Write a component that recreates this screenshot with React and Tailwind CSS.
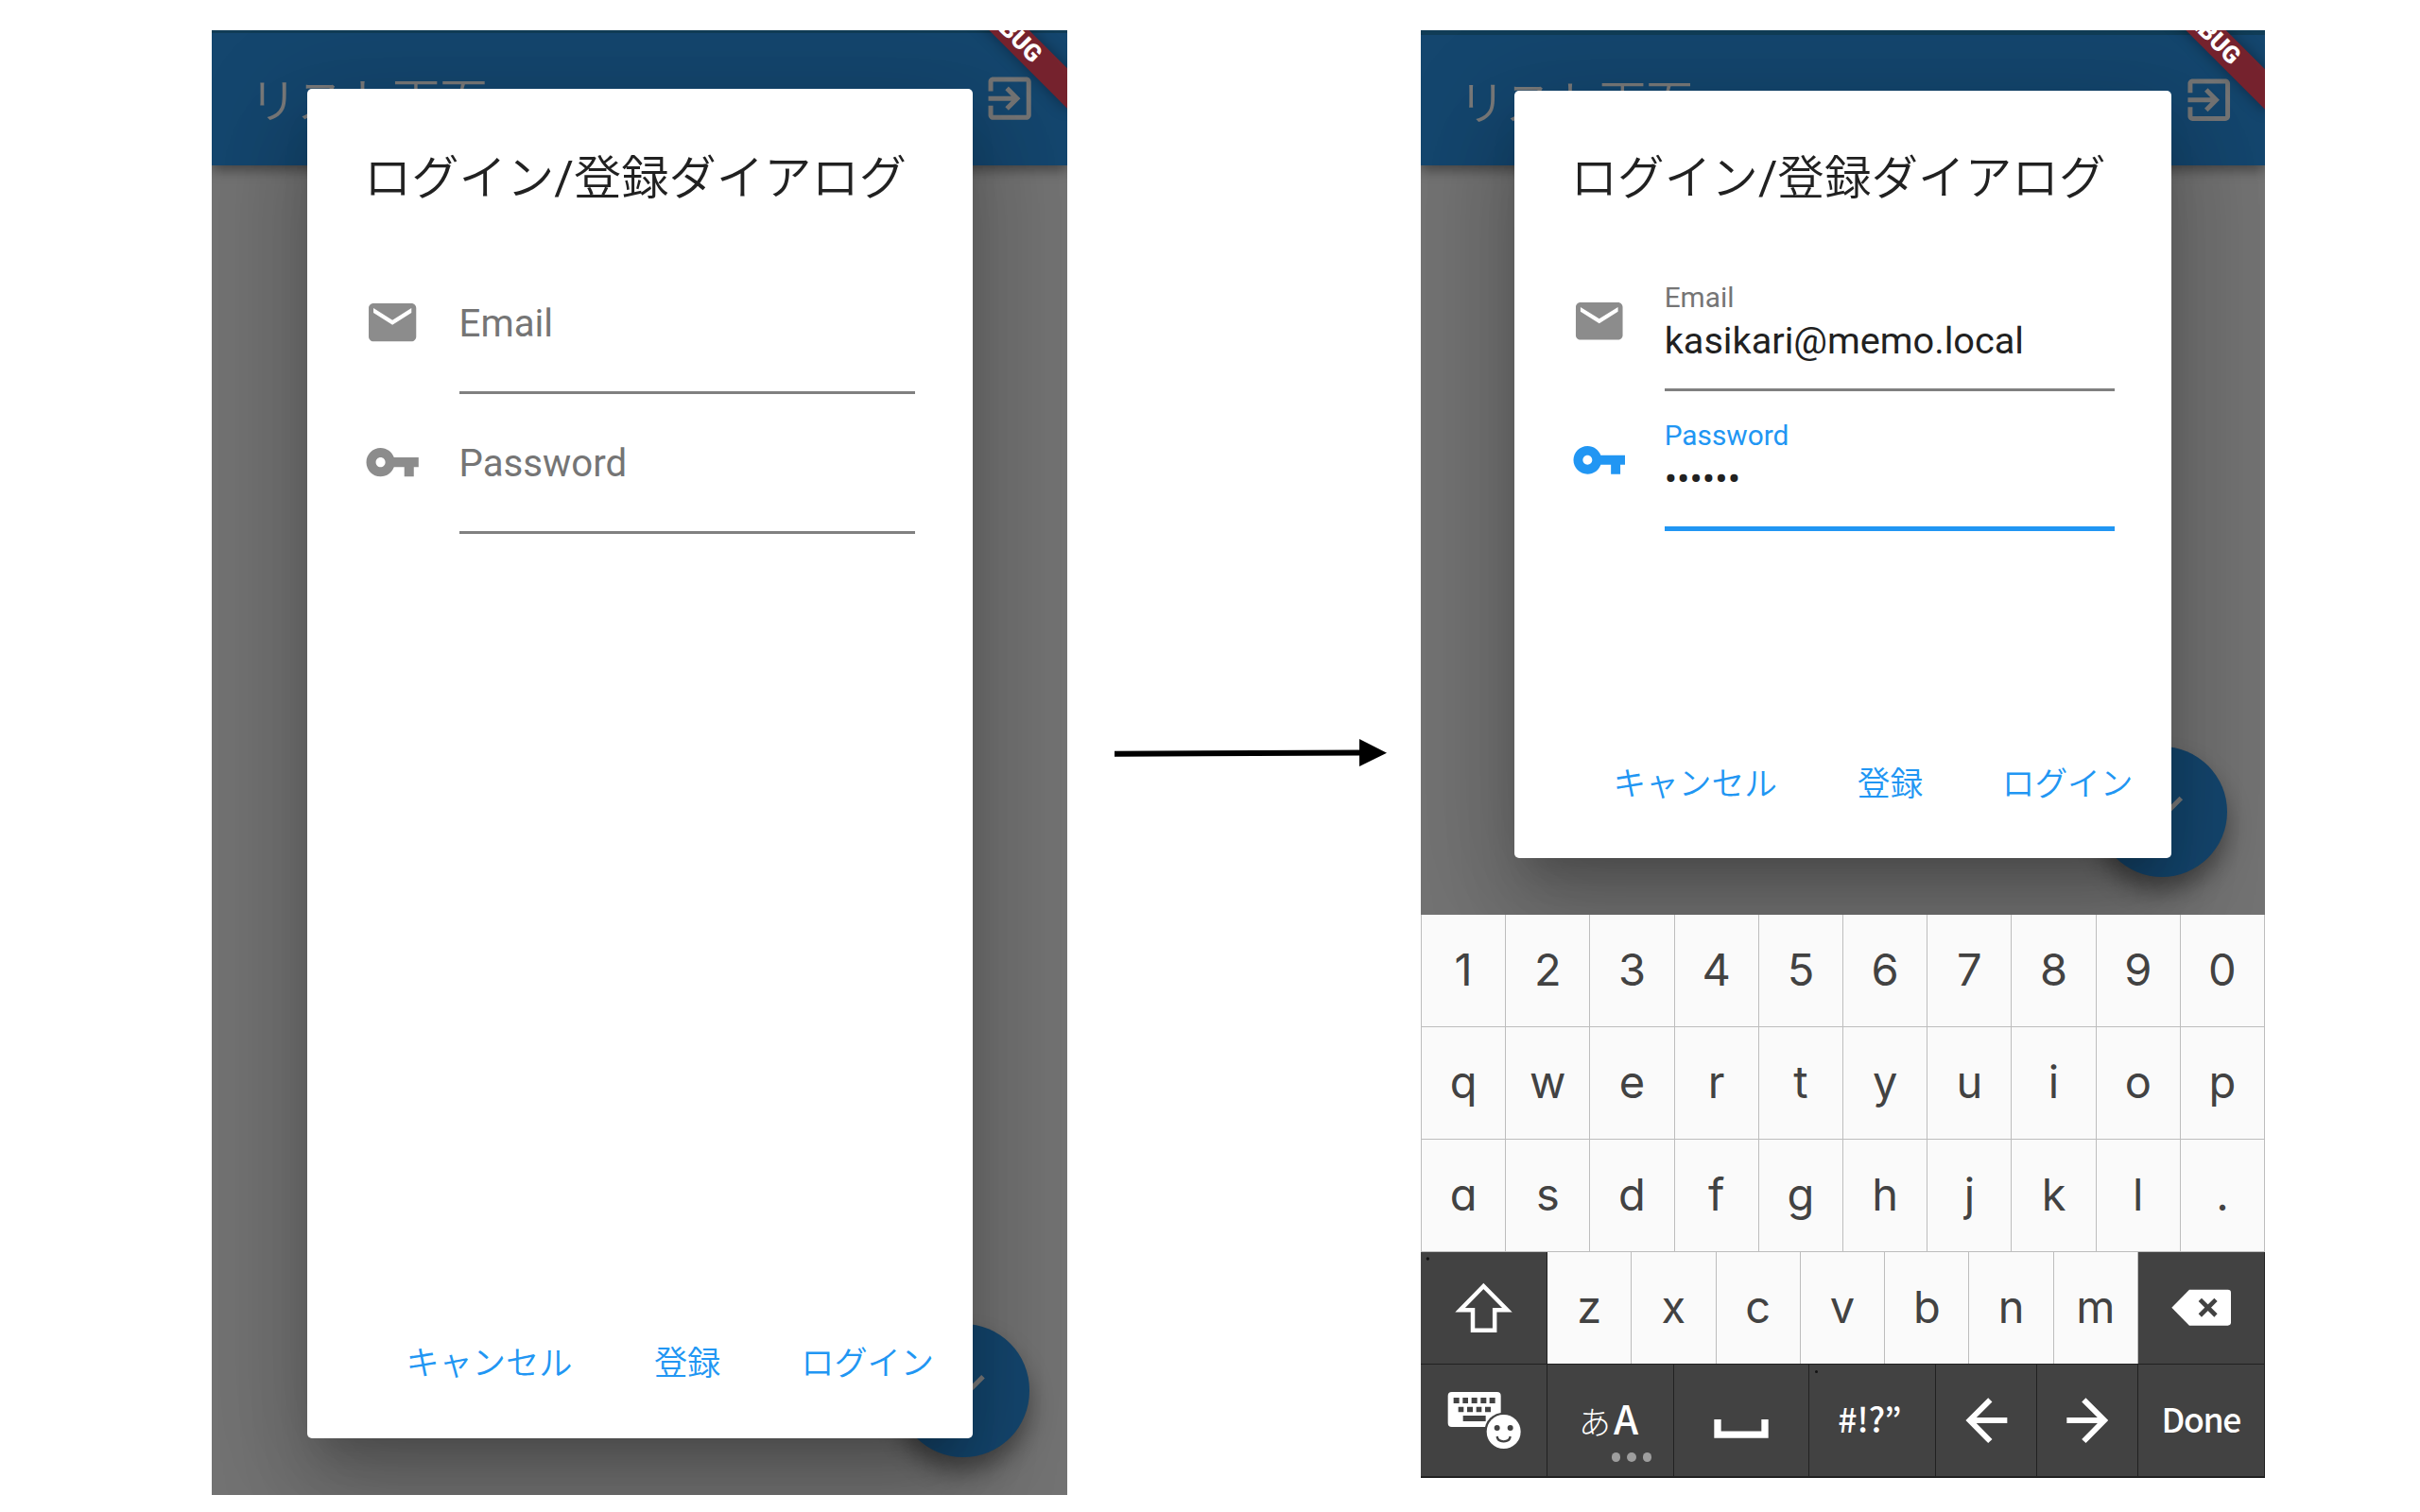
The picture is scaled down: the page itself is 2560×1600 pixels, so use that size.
const jp = "font-['Noto_Sans_CJK_JP',sans-serif] font-[350] whitespace-nowrap";
const dialogShadow =
  "shadow-[0_28px_38px_-17px_rgba(0,0,0,0.2),0_60px_95px_8px_rgba(0,0,0,0.14),0_23px_115px_20px_rgba(0,0,0,0.12)]";

function ExitIcon({ className }) {
  return (
    <svg viewBox="0 0 24 24" className={className} fill="#757575">
      <path d="M10.09 15.59L11.5 17l5-5-5-5-1.41 1.41L12.67 11H3v2h9.67l-2.58 2.59zM19 3H5c-1.11 0-2 .9-2 2v4h2V5h14v14H5v-4H3v4c0 1.1.89 2 2 2h14c1.1 0 2-.9 2-2V5c0-1.1-.9-2-2-2z" />
    </svg>
  );
}

function MailIcon({ className }) {
  return (
    <svg viewBox="0 0 24 24" className={className} fill="#8c8c8c">
      <path d="M20 4H4c-1.1 0-1.99.9-1.99 2L2 18c0 1.1.9 2 2 2h16c1.1 0 2-.9 2-2V6c0-1.1-.9-2-2-2zm0 4l-8 5-8-5V6l8 5 8-5v2z" />
    </svg>
  );
}

function KeyIcon({ className }) {
  return (
    <svg viewBox="0 0 24 24" className={className} fill="currentColor">
      <path d="M12.65 10C11.83 7.67 9.61 6 7 6c-3.31 0-6 2.69-6 6s2.69 6 6 6c2.61 0 4.83-1.67 5.65-4H17v4h4v-4h2v-4H12.65zM7 14c-1.1 0-2-.9-2-2s.9-2 2-2 2 .9 2 2-.9 2-2 2z" />
    </svg>
  );
}

function CheckIcon({ className }) {
  return (
    <svg viewBox="0 0 24 24" className={className} fill="#7a7a7a">
      <path d="M9 16.17L4.83 12l-1.42 1.41L9 19 21 7l-1.41-1.41z" />
    </svg>
  );
}

function DebugBanner({ className }) {
  return (
    <div
      className={
        "absolute flex h-[30px] w-[201px] rotate-45 items-center justify-center bg-[#76232e] font-['Roboto',sans-serif] text-[25.5px] leading-none font-black text-white shadow-[0_0_15px_rgba(0,0,0,0.35)] " +
        className
      }
    >
      DEBUG
    </div>
  );
}

function LeftPhone() {
  return (
    <div className="relative h-[1550px] w-[905px] overflow-hidden bg-[#737373]">
      <header className="relative flex h-[143px] items-start justify-between border-t-[3px] border-[#103c56] bg-[#14466e] pr-[31px] pl-[40px] shadow-[0_5px_12px_rgba(0,0,0,0.4)]">
        <span className={jp + " mt-[38px] text-[50.3px] leading-[60px] text-[#7a7a7a]"}>リスト画面</span>
        <ExitIcon className="mt-[39px] h-[60.3px] w-[60.3px]" />
        <DebugBanner className="top-[-17px] left-[744px]" />
      </header>
      <div className="absolute top-[1369px] left-[724.5px] flex h-[140.5px] w-[140.5px] items-center justify-center rounded-full bg-[#14466e] shadow-[0_15px_25px_rgba(0,0,0,0.4)]">
        <CheckIcon className="h-[60.3px] w-[60.3px]" />
      </div>
      <section
        className={
          "absolute top-[62px] left-[101px] flex h-[1427.5px] w-[703.5px] flex-col rounded-[5px] bg-white pt-[60px] " +
          dialogShadow
        }
      >
        <h2 className={jp + " pl-[60px] text-[50.3px] leading-[60px] text-[#212121]"}>
          ログイン<span className="font-['Roboto',sans-serif] font-normal">/</span>登録ダイアログ
        </h2>
        <div className="mt-[92px] flex h-[106px] gap-[40px] pr-[60.5px] pl-[60.3px] text-[#757575]">
          <MailIcon className="h-[60.3px] w-[60.3px]" />
          <div className="flex-1 border-b-[3px] border-[#808080] pt-[5.5px] font-['Roboto',sans-serif] text-[40.2px] leading-[52px]">
            Email
          </div>
        </div>
        <div className="mt-[42px] flex h-[106px] gap-[40px] pr-[60.5px] pl-[60.3px] text-[#757575]">
          <KeyIcon className="h-[60.3px] w-[60.3px] text-[#8c8c8c]" />
          <div className="flex-1 border-b-[3px] border-[#808080] pt-[5.5px] font-['Roboto',sans-serif] text-[40.2px] leading-[52px]">
            Password
          </div>
        </div>
        <div
          className={
            jp + " mt-auto mb-[62px] flex justify-end gap-[85px] pr-[40.5px] text-[35.2px] leading-[40px] text-[#2196f3]"
          }
        >
          <span className="mr-[1.5px]">キャンセル</span>
          <span>登録</span>
          <span>ログイン</span>
        </div>
      </section>
    </div>
  );
}

function Cell({ children, className }) {
  return (
    <div
      className={
        "flex h-full flex-1 justify-center border-r border-[#bdbdbd] bg-[#fafafa] font-['Inter',sans-serif] text-[47px] leading-[115px] text-[#424242] [font-feature-settings:'cv11'] " +
        (className || "")
      }
    >
      {children}
    </div>
  );
}

function KeyRow({ keys }) {
  return (
    <div className="flex h-[119px] border-b border-l border-[#bdbdbd]">
      {keys.split("").map((k) => (
        <Cell key={k}>{k}</Cell>
      ))}
    </div>
  );
}

const dark = "relative h-full shrink-0 border-r-[1.5px] border-[#212121] bg-[#424242] text-white";

function Keyboard() {
  return (
    <div className="flex h-[596.5px] w-[893px] flex-col bg-[#212121]">
      <KeyRow keys="1234567890" />
      <KeyRow keys="qwertyuiop" />
      <KeyRow keys="asdfghjkl." />
      <div className="flex h-[119px] border-b border-[#212121]">
        <div className={dark + " w-[134px]"}>
          <svg viewBox="70 75 401 357" className="h-[119px] w-[133.67px]">
            <circle cx="92" cy="96" r="5" fill="#111" />
            <path d="M269 183L195 258.500H235V323H304.500V258.500H344Z" fill="none" stroke="#fff" strokeWidth="13.500" />
          </svg>
        </div>
        {"zxcvbnm".split("").map((k) => (
          <Cell key={k}>{k}</Cell>
        ))}
        <div className={dark + " w-[134px]"}>
          <svg viewBox="966 75 401 357" className="h-[119px] w-[133.67px]">
            <path d="M1072 251L1128 194H1250Q1260 194 1260 204V298Q1260 308 1250 308H1128Z" fill="#fff" />
            <path d="M1162 226L1212 276M1212 226L1162 276" stroke="#424242" strokeWidth="14" />
          </svg>
        </div>
      </div>
      <div className="flex h-[118.500px] font-['Noto_Sans_CJK_JP',sans-serif]">
        <div className={dark + " w-[134px]"}>
          <svg viewBox="70 432 401 357" className="h-[119px] w-[133.67px]">
            <rect x="156" y="519" width="168" height="111" rx="12" fill="#fff" />
            <g fill="#424242">
              <path d="M174 537h18v18h-18zM203 537h17v18h-17zM231 537h18v18h-18zM260 537h18v18h-18zM288 537h18v18h-18z" />
              <path d="M189 566h17v17h-17zM217 566h18v17h-18zM246 566h17v17h-17zM274 566h18v17h-18zM204 594h72v18h-72z" />
              <circle cx="333" cy="645" r="61" />
            </g>
            <circle cx="333" cy="645" r="54" fill="#fff" />
            <circle cx="312" cy="633" r="9" fill="#424242" />
            <circle cx="354" cy="633" r="9" fill="#424242" />
            <path d="M312 660Q314 676 333 676T354 660" fill="none" stroke="#424242" strokeWidth="7" />
          </svg>
        </div>
        <div className={dark + " w-[134px] whitespace-nowrap"}>
          <div className="flex h-[88px] items-baseline pt-[28.500px] pl-[33px] leading-[56px]">
            <span className="text-[34px] font-light">あ</span>
            <span className="ml-[3px] text-[42px] font-medium">A</span>
          </div>
          <div className="flex gap-[7px] pt-[5.500px] pl-[67.500px]">
            <span className="h-[9.500px] w-[9.500px] rounded-full bg-[#9e9e9e]" />
            <span className="h-[9.500px] w-[9.500px] rounded-full bg-[#9e9e9e]" />
            <span className="h-[9.500px] w-[9.500px] rounded-full bg-[#9e9e9e]" />
          </div>
        </div>
        <div className={dark + " w-[142.500px]"}>
          <svg viewBox="873 432 428 357" className="h-[119px] w-[142.67px]">
            <path d="M1011 606V654.500H1161V606" fill="none" stroke="#fff" strokeWidth="22" />
          </svg>
        </div>
        <div className={dark + " flex w-[134px] justify-center pr-[4px] text-[35.500px] leading-[113px] font-medium"}>
          <span className="absolute top-[6px] left-[6px] h-[3px] w-[3px] rounded-full bg-[#111]" />
          #!?”
        </div>
        <div className={dark + " w-[107px]"}>
          <svg viewBox="323 432 321 357" className="h-[119px] w-[107px]">
            <path d="M549 609H430M495 544L430 609L495 675" fill="none" stroke="#fff" strokeWidth="18" />
          </svg>
        </div>
        <div className={dark + " w-[107px]"}>
          <svg viewBox="644 432 321 357" className="h-[119px] w-[107px]">
            <path d="M738 609H857M792 544L857 609L792 675" fill="none" stroke="#fff" strokeWidth="18" />
          </svg>
        </div>
        <div
          className={
            dark + " flex w-[134.500px] justify-center text-[35.500px] leading-[113px] font-medium tracking-[-1.3px]"
          }
        >
          Done
        </div>
      </div>
    </div>
  );
}

function RightPhone() {
  return (
    <div className="w-[893px]">
      <div className="relative h-[935.5px] overflow-hidden bg-[#737373]">
        <header className="relative flex h-[143px] items-start justify-between border-t-[5px] border-[#103c56] bg-[#14466e] pr-[30px] pl-[40px] shadow-[0_5px_12px_rgba(0,0,0,0.4)]">
          <span className={jp + " mt-[38px] text-[49.6px] leading-[60px] text-[#7a7a7a]"}>リスト画面</span>
          <ExitIcon className="mt-[39px] h-[59.5px] w-[59.5px]" />
          <DebugBanner className="top-[-17px] left-[732.5px]" />
        </header>
        <div className="absolute top-[757.500px] left-[714.500px] flex h-[138.5px] w-[138.5px] items-center justify-center rounded-full bg-[#14466e] shadow-[0_15px_25px_rgba(0,0,0,0.4)]">
          <CheckIcon className="h-[59.5px] w-[59.5px]" />
        </div>
        <section
          className={
            "absolute top-[64px] left-[99px] flex h-[812px] w-[694.5px] flex-col rounded-[5px] bg-white pt-[58px] " +
            dialogShadow
          }
        >
          <h2 className={jp + " pl-[59.5px] text-[49.6px] leading-[60px] text-[#212121]"}>
            ログイン<span className="font-['Roboto',sans-serif] font-normal">/</span>登録ダイアログ
          </h2>
          <div className="mt-[81px] flex h-[114px] gap-[39.7px] pr-[60px] pl-[59.5px] text-[#757575]">
            <MailIcon className="mt-[10px] h-[59.5px] w-[59.5px]" />
            <div className="flex-1 border-b-[3px] border-[#808080] font-['Roboto',sans-serif]">
              <div className="text-[29.8px] leading-[30px]">Email</div>
              <div className="pt-[8px] text-[39.7px] leading-[46px] text-[#212121]">kasikari@memo.local</div>
            </div>
          </div>
          <div className="mt-[32px] flex h-[116px] gap-[39.7px] pr-[60px] pl-[59.5px] text-[#2196f3]">
            <KeyIcon className="mt-[11px] h-[59.5px] w-[59.5px]" />
            <div className="flex-1 border-b-[5px] border-[#2196f3] font-['Roboto',sans-serif]">
              <div className="text-[29.8px] leading-[30px]">Password</div>
              <div className="pt-[8px] text-[39.7px] leading-[46px] text-[#212121]">••••••</div>
            </div>
          </div>
          <div
            className={
              jp +
              " mt-auto mb-[61px] flex justify-end gap-[83.5px] pr-[40px] text-[34.7px] leading-[40px] text-[#2196f3]"
            }
          >
            <span className="mr-[1.5px]">キャンセル</span>
            <span>登録</span>
            <span>ログイン</span>
          </div>
        </section>
      </div>
      <Keyboard />
    </div>
  );
}

export default function App() {
  return (
    <main className="flex h-[1600px] w-[2560px] items-start overflow-hidden bg-white pt-[32px] pl-[224px]">
      <LeftPhone />
      <div className="w-[374px] pt-[748px] pl-[50px]">
        <svg viewBox="0 0 290 34" className="h-[34px] w-[290px]">
          <path d="M0 17.700L262 16.500" stroke="#000" strokeWidth="6" />
          <path d="M259 2V31L288 16.700Z" />
        </svg>
      </div>
      <RightPhone />
    </main>
  );
}
